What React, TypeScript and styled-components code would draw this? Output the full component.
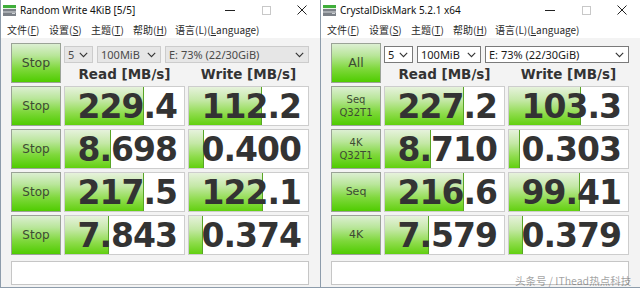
import React from 'react';
import styled, { createGlobalStyle } from 'styled-components';

const GlobalStyle = createGlobalStyle`
  html, body { margin: 0; padding: 0; background: #ffffff; }
  #root { width: 640px; height: 292px; }
`;

const Page = styled.div`
  position: relative;
  display: flex;
  width: 640px;
  height: 292px;
  overflow: hidden;
  background: #ffffff;
`;

const Window = styled.div`
  width: 320px;
  height: 288px;
  box-sizing: border-box;
  border-left: 1px solid #8d9cab;
  border-bottom: 1px solid #8d9cab;
  background: #f3f3f3;
  display: flex;
  flex-direction: column;
`;

const TitleBar = styled.div`
  height: 20px;
  background: #ffffff;
  display: flex;
  align-items: center;
`;

const AppIcon = styled.svg`
  margin-left: 2px;
  flex: none;
`;

const TitleText = styled.span`
  margin-left: 4px;
  font-family: "Noto Sans", "Open Sans", sans-serif;
  font-size: 10px;
  color: #111;
  white-space: nowrap;
`;

const Controls = styled.div`
  margin-left: auto;
  display: flex;
  height: 20px;
`;

const Control = styled.div`
  width: 36px;
  height: 20px;
  display: flex;
  align-items: center;
  justify-content: center;
`;

const MenuBar = styled.div`
  height: 18px;
  background: #ffffff;
  display: flex;
  align-items: center;
  padding-left: 6px;
`;

const MenuItem = styled.span<{ $wide?: boolean }>`
  width: ${(p) => (p.$wide ? 'auto' : '42px')};
  font-family: "Noto Sans CJK SC", "Noto Sans", sans-serif;
  font-size: 10px;
  color: #2a2a2a;
  white-space: nowrap;
  u { text-decoration: underline; text-underline-offset: 1px; }
`;

const Body = styled.div`
  display: flex;
  flex-direction: column;
  padding: 5px 0 2px 10px;
`;

const Top = styled.div`
  display: flex;
  gap: 3px;
  height: 40px;
  margin-bottom: 3px;
`;

const GreenButton = styled.div<{ $size?: number }>`
  box-sizing: border-box;
  width: 50px;
  height: 40px;
  border: 1px solid #9aa396;
  background: linear-gradient(to bottom, #dcefd2 0%, #b9e69a 30%, #7fd83c 65%, #4fcc00 100%);
  display: flex;
  flex-direction: column;
  align-items: center;
  justify-content: center;
  font-family: "DejaVu Sans", Verdana, sans-serif;
  font-size: ${(p) => p.$size ?? 12}px;
  line-height: ${(p) => ((p.$size ?? 12) < 11 ? '13px' : '14px')};
  color: #3d4b33;
  text-align: center;
`;

const TopRight = styled.div`
  width: 245px;
  display: flex;
  flex-direction: column;
`;

const Selects = styled.div`
  display: flex;
  gap: 4px;
  margin-top: 3px;
  height: 17px;
`;

const Select = styled.div<{ $w: number; $disabled?: boolean }>`
  box-sizing: border-box;
  width: ${(p) => p.$w}px;
  height: 17px;
  border: 1px solid ${(p) => (p.$disabled ? '#cccccc' : '#7a7a7a')};
  background: ${(p) => (p.$disabled ? '#e6e6e6' : '#ffffff')};
  display: flex;
  align-items: center;
  padding: 0 4px 0 3px;
  font-family: "Noto Sans", "Open Sans", sans-serif;
  font-size: 11px;
  color: ${(p) => (p.$disabled ? '#4a4a4a' : '#1a1a1a')};
  white-space: nowrap;
  span { flex: 1; }
`;

const Headers = styled.div`
  display: flex;
  gap: 3px;
  height: 20px;
`;

const Header = styled.div`
  width: 121px;
  text-align: center;
  line-height: 22px;
  font-family: "DejaVu Sans", Verdana, sans-serif;
  font-weight: bold;
  font-size: 13.5px;
  color: #333333;
  white-space: nowrap;
`;

const Rows = styled.div`
  display: grid;
  grid-template-columns: 50px 121px 121px;
  grid-auto-rows: 40px;
  column-gap: 3px;
  row-gap: 3px;
`;

const ValueCell = styled.div`
  position: relative;
  box-sizing: border-box;
  border: 1px solid #cdcdcd;
  background: #ffffff;
  overflow: hidden;
  display: flex;
  align-items: center;
  justify-content: flex-end;
  padding-right: 7px;
`;

const Fill = styled.div`
  position: absolute;
  left: 0;
  top: 0;
  bottom: 0;
  box-sizing: border-box;
  border-right: 1px solid #58a526;
  background: linear-gradient(to bottom, #e6f2dc 0%, #c4e8a6 35%, #8edc4c 70%, #62d010 100%);
`;

const Number = styled.span`
  position: relative;
  font-family: "DejaVu Sans", Verdana, sans-serif;
  font-weight: bold;
  font-size: 33px;
  letter-spacing: -1px;
  line-height: 1;
  color: #333333;
`;

const Status = styled.div`
  box-sizing: border-box;
  width: 298px;
  height: 24px;
  margin-top: 6px;
  border: 1px solid #c6c6c6;
  background: #ffffff;
`;

const Watermark = styled.div`
  position: absolute;
  left: 515px;
  top: 273px;
  font-family: "Noto Sans CJK SC", "Noto Sans", sans-serif;
  font-size: 10.5px;
  color: rgba(70, 70, 70, 0.5);
  white-space: nowrap;
`;

const Chevron = () => (
  <svg width="9" height="6" viewBox="0 0 9 6">
    <polyline points="0.8,0.8 4.5,4.6 8.2,0.8" fill="none" stroke="#333" strokeWidth="1.1" />
  </svg>
);

const Icon = () => (
  <AppIcon width="13" height="11" viewBox="0 0 13 11">
    <rect x="0" y="0" width="13" height="3" fill="#3fae3a" />
    <rect x="0" y="3" width="13" height="1" fill="#e8f4e6" />
    <rect x="0" y="4" width="13" height="7" fill="#7c8188" />
    <rect x="0" y="6" width="13" height="2" fill="#a9adb2" />
    <rect x="9" y="8" width="3" height="1" fill="#d0d4d8" />
  </AppIcon>
);

type Cell = { v: string; fill: number };
type WinProps = {
  title: string;
  topLabel: string;
  labels: string[][];
  rows: [Cell, Cell][];
  disabled?: boolean;
};

const CDMWindow: React.FC<WinProps> = ({ title, topLabel, labels, rows, disabled }) => (
  <Window>
    <TitleBar>
      <Icon />
      <TitleText>{title}</TitleText>
      <Controls>
        <Control>
          <svg width="10" height="10" viewBox="0 0 10 10">
            <line x1="0" y1="5.5" x2="10" y2="5.5" stroke="#222" strokeWidth="1" />
          </svg>
        </Control>
        <Control>
          <svg width="9" height="9" viewBox="0 0 9 9">
            <rect x="0.5" y="0.5" width="8" height="8" fill="none" stroke="#c8c8c8" strokeWidth="1" />
          </svg>
        </Control>
        <Control>
          <svg width="10" height="10" viewBox="0 0 10 10">
            <path d="M0.5 0.5 L9.5 9.5 M9.5 0.5 L0.5 9.5" stroke="#222" strokeWidth="1" />
          </svg>
        </Control>
      </Controls>
    </TitleBar>
    <MenuBar>
      <MenuItem>文件(<u>F</u>)</MenuItem>
      <MenuItem>设置(<u>S</u>)</MenuItem>
      <MenuItem>主题(<u>T</u>)</MenuItem>
      <MenuItem>帮助(<u>H</u>)</MenuItem>
      <MenuItem $wide>语言(L)(<u>L</u>anguage)</MenuItem>
    </MenuBar>
    <Body>
      <Top>
        <GreenButton $size={12.5}>{topLabel}</GreenButton>
        <TopRight>
          <Selects>
            <Select $w={29} $disabled={disabled}><span>5</span><Chevron /></Select>
            <Select $w={64} $disabled={disabled}><span>100MiB</span><Chevron /></Select>
            <Select $w={144} $disabled={disabled}><span>E: 73% (22/30GiB)</span><Chevron /></Select>
          </Selects>
          <Headers>
            <Header>Read [MB/s]</Header>
            <Header>Write [MB/s]</Header>
          </Headers>
        </TopRight>
      </Top>
      <Rows>
        {rows.map((r, i) => (
          <React.Fragment key={i}>
            <GreenButton $size={labels[i].length > 1 ? 10 : labels[i][0] === 'Stop' ? 12 : 11}>
              {labels[i].map((l, j) => (
                <div key={j}>{l}</div>
              ))}
            </GreenButton>
            {r.map((c, j) => (
              <ValueCell key={j}>
                <Fill style={{ width: c.fill }} />
                <Number>{c.v}</Number>
              </ValueCell>
            ))}
          </React.Fragment>
        ))}
      </Rows>
      <Status />
    </Body>
  </Window>
);

export default function App() {
  return (
    <>
      <GlobalStyle />
      <Page>
        <CDMWindow
          title="Random Write 4KiB [5/5]"
          topLabel="Stop"
          disabled
          labels={[['Stop'], ['Stop'], ['Stop'], ['Stop']]}
          rows={[
            [{ v: '229.4', fill: 79 }, { v: '112.2', fill: 73 }],
            [{ v: '8.698', fill: 46 }, { v: '0.400', fill: 15 }],
            [{ v: '217.5', fill: 79 }, { v: '122.1', fill: 74 }],
            [{ v: '7.843', fill: 44 }, { v: '0.374', fill: 14 }],
          ]}
        />
        <CDMWindow
          title="CrystalDiskMark 5.2.1 x64"
          topLabel="All"
          labels={[['Seq', 'Q32T1'], ['4K', 'Q32T1'], ['Seq'], ['4K']]}
          rows={[
            [{ v: '227.2', fill: 79 }, { v: '103.3', fill: 72 }],
            [{ v: '8.710', fill: 46 }, { v: '0.303', fill: 11 }],
            [{ v: '216.6', fill: 79 }, { v: '99.41', fill: 71 }],
            [{ v: '7.579', fill: 44 }, { v: '0.379', fill: 14 }],
          ]}
        />
        <Watermark>头条号 / IThead热点科技</Watermark>
      </Page>
    </>
  );
}
